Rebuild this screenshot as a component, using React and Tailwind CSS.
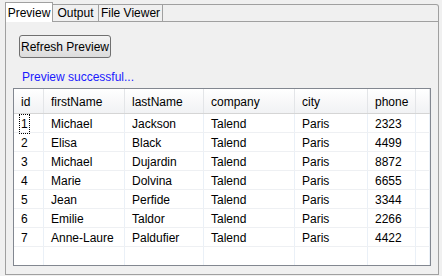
import React from "react";

const columns = [
  { key: "id", label: "id", width: "w-[30px]" },
  { key: "firstName", label: "firstName", width: "w-[81px]" },
  { key: "lastName", label: "lastName", width: "w-[79px]" },
  { key: "company", label: "company", width: "w-[91px]" },
  { key: "city", label: "city", width: "w-[73px]" },
  { key: "phone", label: "phone", width: "w-[48px]" },
];

const rows = [
  { id: "1", firstName: "Michael", lastName: "Jackson", company: "Talend", city: "Paris", phone: "2323" },
  { id: "2", firstName: "Elisa", lastName: "Black", company: "Talend", city: "Paris", phone: "4499" },
  { id: "3", firstName: "Michael", lastName: "Dujardin", company: "Talend", city: "Paris", phone: "8872" },
  { id: "4", firstName: "Marie", lastName: "Dolvina", company: "Talend", city: "Paris", phone: "6655" },
  { id: "5", firstName: "Jean", lastName: "Perfide", company: "Talend", city: "Paris", phone: "3344" },
  { id: "6", firstName: "Emilie", lastName: "Taldor", company: "Talend", city: "Paris", phone: "2266" },
  { id: "7", firstName: "Anne-Laure", lastName: "Paldufier", company: "Talend", city: "Paris", phone: "4422" },
];

export default function App() {
  return (
    <div className="w-[442px] h-[276px] bg-[#f0f0f0] text-[12px] text-black font-['Liberation_Sans',sans-serif] overflow-hidden">
      <div className="ml-[5px] pt-[2px] w-[434px] flex flex-col">
        {/* tab strip */}
        <div className="flex h-[20px] items-end">
          <div className="h-[20px] w-[48px] bg-white border border-b-0 border-[#a0a0a0] flex items-center justify-center leading-none pt-[1px]">
            Preview
          </div>
          <div className="h-[18px] w-[46px] border-t border-r border-b border-[#a0a0a0] flex items-center justify-center leading-none">
            Output
          </div>
          <div className="h-[18px] w-[64px] border-t border-r border-b border-[#a0a0a0] flex items-center justify-center leading-none">
            File Viewer
          </div>
          <div className="h-[18px] flex-1 border-t border-r border-b border-[#a0a0a0] rounded-tr-[3px]" />
        </div>

        {/* tab content */}
        <div className="h-[253px] border-l border-r border-b border-[#a0a0a0] flex flex-col">
          <div className="ml-[13px] mt-[13px] w-[92px] h-[23px] rounded-[3px] border border-[#707070] bg-gradient-to-b from-[#f4f4f4] to-[#dcdcdc] flex items-center justify-center leading-none">
            Refresh Preview
          </div>
          <div className="ml-[16px] mt-[13px] text-[#1a1aff] leading-none">Preview successful...</div>

          <div className="ml-[7px] mt-[5px] w-[418px] h-[178px] border border-[#828790] bg-white flex flex-col">
            {/* header */}
            <div className="flex h-[25px] bg-gradient-to-b from-white to-[#f1f2f4] border-b border-[#d5d5d5]">
              {columns.map((c) => (
                <div
                  key={c.key}
                  className={`${c.width} shrink-0 border-r border-[#e3e5e8] pl-[7px] pt-[1px] flex items-center`}
                >
                  {c.label}
                </div>
              ))}
              <div className="flex-1 border-r border-[#e3e5e8]" />
            </div>

            {rows.map((r, i) => (
              <div key={r.id} className="flex h-[19px] border-b border-[#eef0f3]">
                {columns.map((c) => (
                  <div
                    key={c.key}
                    className={`${c.width} shrink-0 border-r border-[#eaf0f7] pl-[7px] pt-[2px] flex items-center`}
                  >
                    {i === 0 && c.key === "id" ? (
                      <span className="outline outline-1 outline-dotted outline-black -ml-[1px] px-[1px]">{r[c.key]}</span>
                    ) : (
                      r[c.key]
                    )}
                  </div>
                ))}
                <div className="flex-1 border-r border-[#eaf0f7]" />
              </div>
            ))}

            <div className="flex flex-1">
              {columns.map((c) => (
                <div key={c.key} className={`${c.width} shrink-0 border-r border-[#eaf0f7]`} />
              ))}
              <div className="flex-1 border-r border-[#eaf0f7]" />
            </div>
          </div>
        </div>
      </div>
    </div>
  );
}
